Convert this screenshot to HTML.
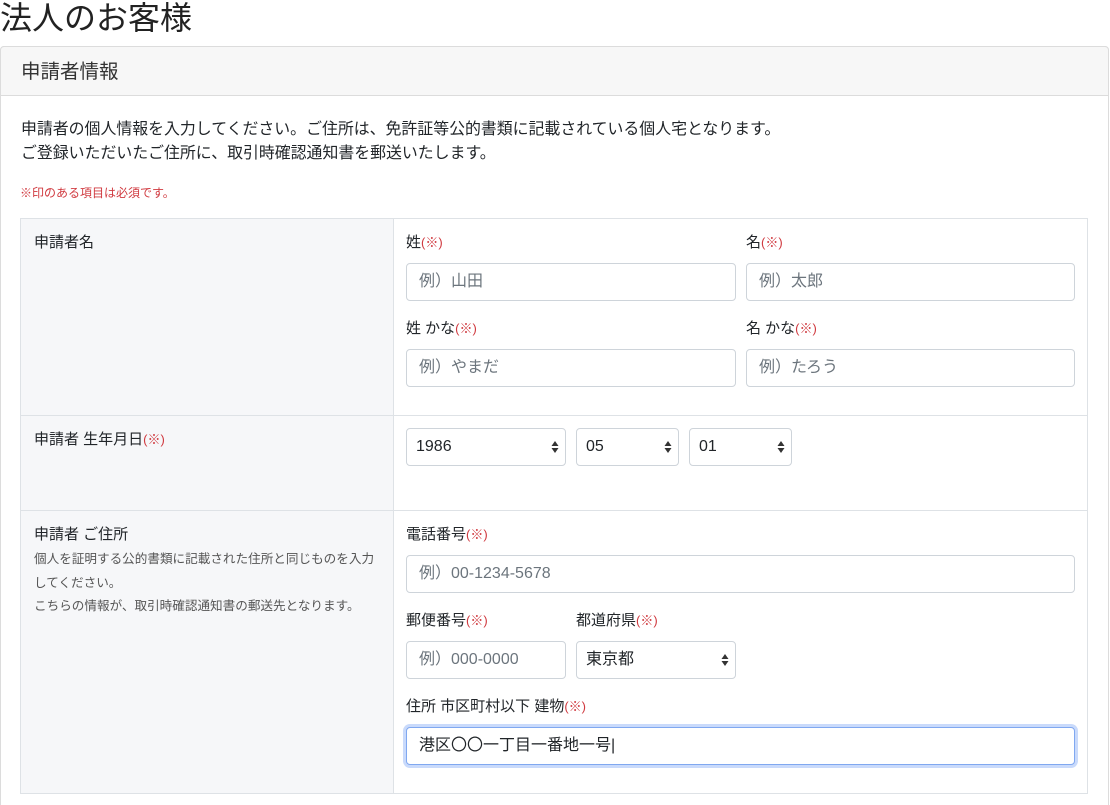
<!DOCTYPE html>
<html><head><meta charset="utf-8"><style>
*{box-sizing:border-box;margin:0;padding:0}
html,body{width:1110px;height:805px;overflow:hidden}
body{background:#fff;font-family:"Liberation Sans","Noto Sans CJK JP",sans-serif;color:#212529;position:relative}
.a{position:absolute;white-space:nowrap}
h1{position:absolute;left:0;top:-3px;font-size:32px;font-weight:400;line-height:42px;color:#222}
.card{position:absolute;left:0;top:46px;width:1109px;height:790px;border:1px solid #dcdcdc;border-radius:4px}
.ch{position:absolute;left:0;top:46px;width:1109px;height:50px;background:#f7f7f7;border:1px solid #dcdcdc;border-radius:4px 4px 0 0}
.t{font-size:15px;line-height:20px}
.r{color:#d0393f;font-size:13px}
.sm{font-size:12px;color:#d0393f}
.lc{position:absolute;left:20px;width:374px;background:#f6f7f9;border:1px solid #dee2e6}
.rc{position:absolute;left:393px;width:695px;background:#fff;border:1px solid #dee2e6}
.in{position:absolute;height:38px;border:1px solid #ced4da;border-radius:4px;background:#fff;font-size:16px;line-height:36px;padding-left:12px;color:#6c757d}
.sel{color:#212529;padding-left:9px}
.arr{position:absolute;right:6px;top:11px;width:8px;height:14px}
.note{font-size:12.6px;color:#555;line-height:23.5px}
</style></head><body>
<h1>法人のお客様</h1>
<div class="card"></div>
<div class="ch"></div>
<div class="a" style="left:21px;top:59px;font-size:19.5px;line-height:26px;color:#333">申請者情報</div>
<div class="a" style="left:21px;top:118px;line-height:24px;font-size:15.9px">申請者の個人情報を入力してください。ご住所は、免許証等公的書類に記載されている個人宅となります。<br>ご登録いただいたご住所に、取引時確認通知書を郵送いたします。</div>
<div class="a sm" style="left:20px;top:184px">※印のある項目は必須です。</div>

<div class="lc" style="top:218px;height:198px"></div><div class="rc" style="top:218px;height:198px"></div>
<div class="lc" style="top:415px;height:96px"></div><div class="rc" style="top:415px;height:96px"></div>
<div class="lc" style="top:510px;height:284px"></div><div class="rc" style="top:510px;height:284px"></div>

<div class="a t" style="left:34px;top:233px">申請者名</div>
<div class="a t" style="left:34px;top:430px">申請者 生年月日<span class="r">(※)</span></div>
<div class="a t" style="left:34px;top:525px">申請者 ご住所</div>
<div class="a note" style="left:34px;top:548px">個人を証明する公的書類に記載された住所と同じものを入力<br>してください。<br>こちらの情報が、取引時確認通知書の郵送先となります。</div>

<div class="a t" style="left:406px;top:233px">姓<span class="r">(※)</span></div>
<div class="a t" style="left:746px;top:233px">名<span class="r">(※)</span></div>
<div class="in" style="left:406px;top:263px;width:330px">例）山田</div>
<div class="in" style="left:746px;top:263px;width:329px">例）太郎</div>
<div class="a t" style="left:406px;top:319px">姓 かな<span class="r">(※)</span></div>
<div class="a t" style="left:746px;top:319px">名 かな<span class="r">(※)</span></div>
<div class="in" style="left:406px;top:349px;width:330px">例）やまだ</div>
<div class="in" style="left:746px;top:349px;width:329px">例）たろう</div>

<div class="in sel" style="left:406px;top:428px;width:160px">1986<svg class="arr" viewBox="0 0 8 14"><path d="M4 1L7.5 6H0.5Z M4 13L7.5 8H0.5Z" fill="#333"/></svg></div>
<div class="in sel" style="left:576px;top:428px;width:103px">05<svg class="arr" viewBox="0 0 8 14"><path d="M4 1L7.5 6H0.5Z M4 13L7.5 8H0.5Z" fill="#333"/></svg></div>
<div class="in sel" style="left:689px;top:428px;width:103px">01<svg class="arr" viewBox="0 0 8 14"><path d="M4 1L7.5 6H0.5Z M4 13L7.5 8H0.5Z" fill="#333"/></svg></div>

<div class="a t" style="left:406px;top:525px">電話番号<span class="r">(※)</span></div>
<div class="in" style="left:406px;top:555px;width:669px">例）00-1234-5678</div>
<div class="a t" style="left:406px;top:611px">郵便番号<span class="r">(※)</span></div>
<div class="a t" style="left:576px;top:611px">都道府県<span class="r">(※)</span></div>
<div class="in" style="left:406px;top:641px;width:160px">例）000-0000</div>
<div class="in sel" style="left:576px;top:641px;width:160px">東京都<svg class="arr" viewBox="0 0 8 14"><path d="M4 1L7.5 6H0.5Z M4 13L7.5 8H0.5Z" fill="#333"/></svg></div>
<div class="a t" style="left:406px;top:697px">住所 市区町村以下 建物<span class="r">(※)</span></div>
<div class="in sel" style="left:406px;top:727px;width:669px;padding-left:12px;border-color:#80a8f0;box-shadow:0 0 0 3px #c9dafb">港区〇〇一丁目一番地一号|</div>
</body></html>
